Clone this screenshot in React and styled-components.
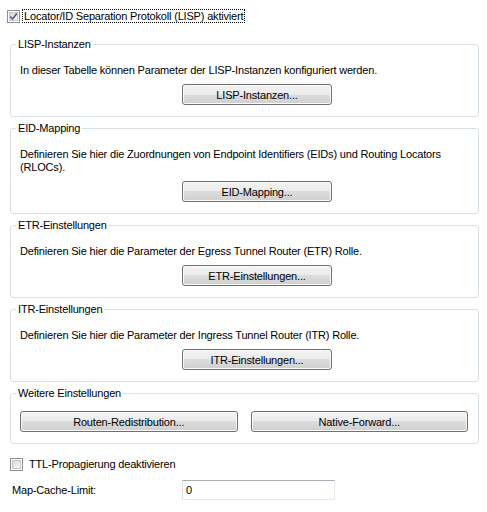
import React from "react";
import styled, { createGlobalStyle } from "styled-components";

const GlobalStyle = createGlobalStyle`
  html, body {
    margin: 0;
    padding: 0;
    background: #ffffff;
  }
  body {
    font-family: "Liberation Sans", Arial, sans-serif;
    font-size: 11px;
    color: #000000;
  }
`;

const Page = styled.div`
  width: 487px;
  height: 512px;
  box-sizing: border-box;
  padding: 8px 8px 0 10px;
  letter-spacing: -0.18px;
`;

const CheckRow = styled.label`
  display: flex;
  align-items: center;
  gap: ${(p) => p.$gap || 4}px;
  height: 14px;
  margin: ${(p) => p.$before || 0}px 0 ${(p) => p.$after || 0}px
    ${(p) => p.$shift || 0}px;
`;

const Box = styled.span`
  position: relative;
  display: inline-block;
  width: 13px;
  height: 13px;
  box-sizing: border-box;
  border: 1px solid #8f8f8f;
  background: #ffffff;
  flex: none;

  &::before {
    content: "";
    position: absolute;
    inset: 1px;
    border: 1px solid #c6c6c6;
    background: linear-gradient(135deg, #d6d6d6 0%, #f0f0f0 70%, #fbfbfb 100%);
  }
`;

const Tick = styled.svg`
  position: absolute;
  left: 1px;
  top: 1px;
  width: 9px;
  height: 9px;
`;

const CheckText = styled.span`
  line-height: 12px;
  padding: 0 1px;
  outline: ${(p) => (p.$focus ? "1px dotted #000" : "none")};
`;

const Group = styled.fieldset`
  margin: 0 0 4px 0;
  padding: ${(p) => p.$top || 13}px 10px 11px 9px;
  border: 1px solid #d5dfe5;
  border-radius: 3px;
  min-width: 0;
`;

const Legend = styled.legend`
  margin-left: -4px;
  padding: 0 2px;
  line-height: 14px;
  height: 14px;
`;

const Desc = styled.p`
  margin: 0 0 7px 0;
  line-height: 13px;
  padding-right: 20px;
`;

const ButtonRow = styled.div`
  display: grid;
  grid-template-columns: ${(p) => p.$cols || "150px"};
  column-gap: 13px;
  padding-left: ${(p) => p.$indent || 0}px;
`;

const Button = styled.button`
  height: 21px;
  margin: 0;
  padding: 0 6px;
  font: inherit;
  letter-spacing: inherit;
  color: #000000;
  border: 1px solid #707070;
  border-radius: 3px;
  background: linear-gradient(
    to bottom,
    #f2f2f2 0%,
    #ebebeb 50%,
    #dddddd 50%,
    #cfcfcf 100%
  );
  box-shadow: inset 0 0 0 1px #fbfbfb;
  text-align: center;
`;

const FieldRow = styled.div`
  display: grid;
  grid-template-columns: 170px 153px;
  align-items: center;
  padding-left: 2px;
`;

const Input = styled.div`
  height: 20px;
  box-sizing: border-box;
  padding: 0 3px;
  line-height: 18px;
  border: 1px solid #e3e9ef;
  border-top-color: #abadb3;
  border-left-color: #dbdfe6;
  background: #ffffff;
`;

const Checkbox = ({ checked }) => (
  <Box>
    {checked && (
      <Tick viewBox="0 0 9 9">
        <path
          d="M1.2 4.6 L3.6 7 L7.8 1.6"
          fill="none"
          stroke="#4d6185"
          strokeWidth="1.7"
        />
      </Tick>
    )}
  </Box>
);

const groups = [
  {
    title: "LISP-Instanzen",
    text: "In dieser Tabelle können Parameter der LISP-Instanzen konfiguriert werden.",
    button: "LISP-Instanzen...",
  },
  {
    title: "EID-Mapping",
    text: "Definieren Sie hier die Zuordnungen von Endpoint Identifiers (EIDs) und Routing Locators (RLOCs).",
    button: "EID-Mapping...",
  },
  {
    title: "ETR-Einstellungen",
    text: "Definieren Sie hier die Parameter der Egress Tunnel Router (ETR) Rolle.",
    button: "ETR-Einstellungen...",
  },
  {
    title: "ITR-Einstellungen",
    text: "Definieren Sie hier die Parameter der Ingress Tunnel Router (ITR) Rolle.",
    button: "ITR-Einstellungen...",
  },
];

export default function App() {
  return (
    <>
      <GlobalStyle />
      <Page>
        <CheckRow $gap={3} $after={14} $shift={-3} $before={1}>
          <Checkbox checked />
          <CheckText $focus>Locator/ID Separation Protokoll (LISP) aktiviert</CheckText>
        </CheckRow>

        {groups.map((g) => (
          <Group key={g.title}>
            <Legend>{g.title}</Legend>
            <Desc>{g.text}</Desc>
            <ButtonRow $indent={162}>
              <Button>{g.button}</Button>
            </ButtonRow>
          </Group>
        ))}

        <Group $top={11}>
          <Legend>Weitere Einstellungen</Legend>
          <ButtonRow $cols="1fr 1fr">
            <Button>Routen-Redistribution...</Button>
            <Button>Native-Forward...</Button>
          </ButtonRow>
        </Group>

        <CheckRow $gap={5} $before={13} $after={9}>
          <Checkbox />
          <CheckText>TTL-Propagierung deaktivieren</CheckText>
        </CheckRow>

        <FieldRow>
          <span>Map-Cache-Limit:</span>
          <Input>0</Input>
        </FieldRow>
      </Page>
    </>
  );
}
